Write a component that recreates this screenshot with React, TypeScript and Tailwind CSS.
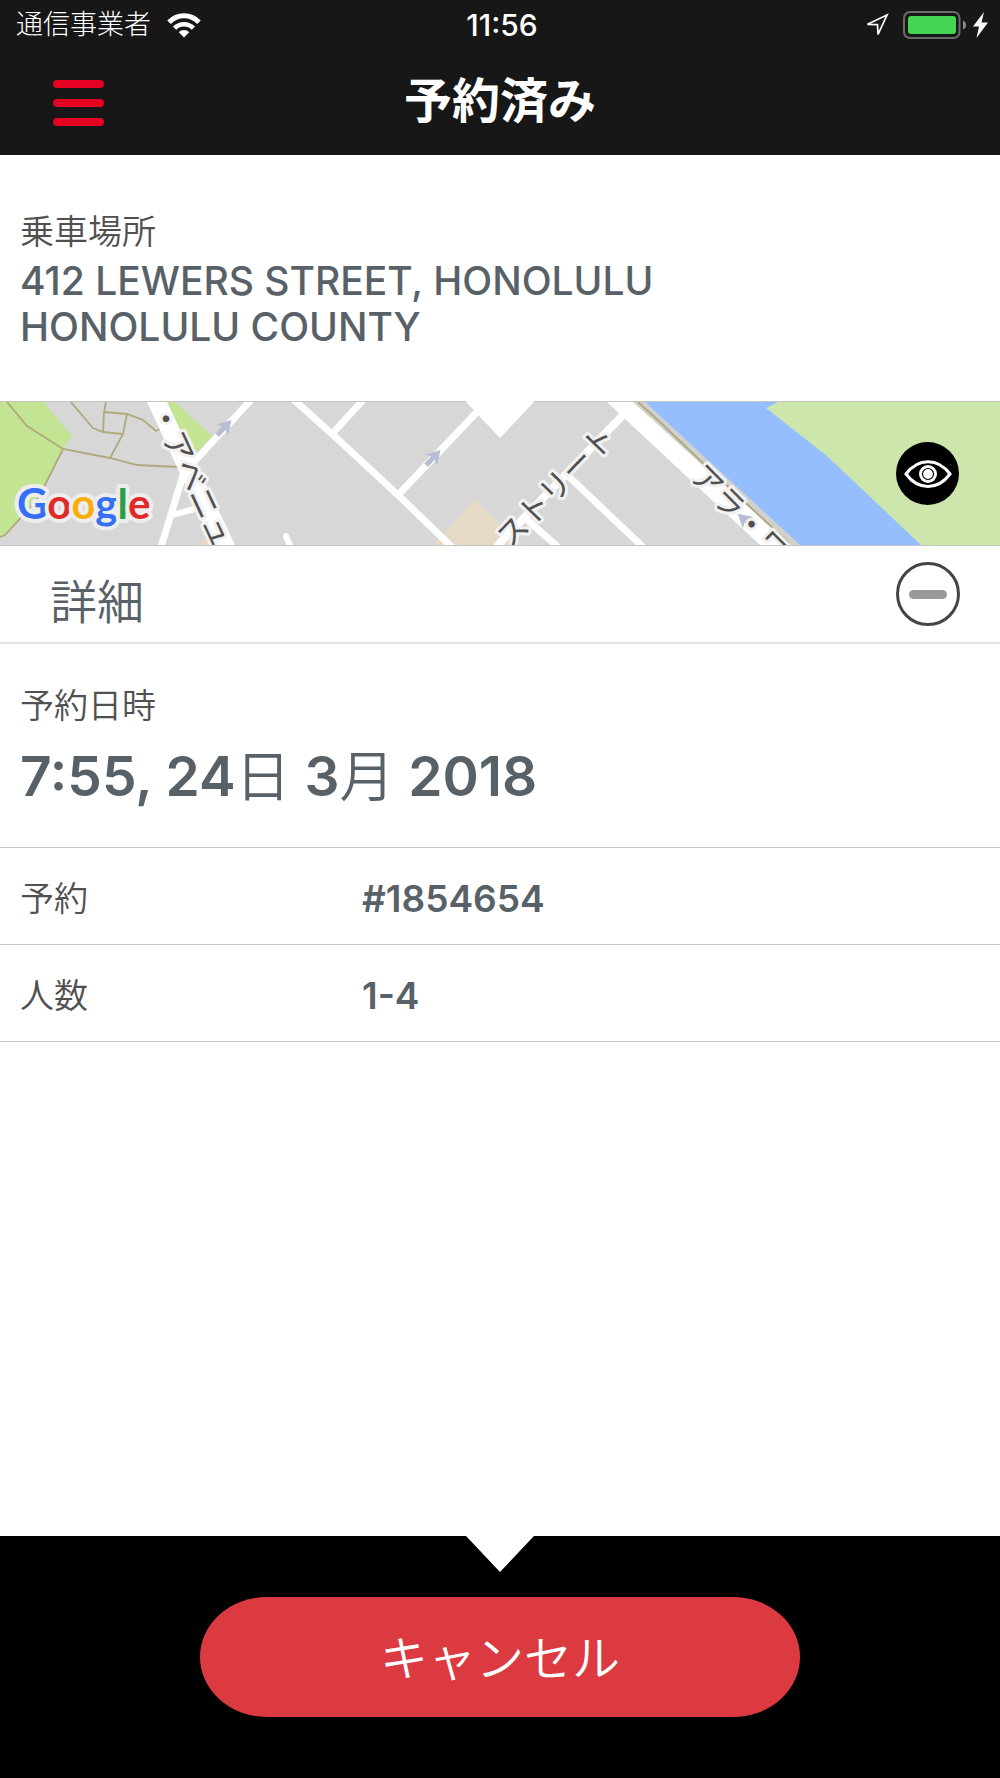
import React, { useState } from 'react';

const booking = {
  pickup: ['412 LEWERS STREET, HONOLULU', 'HONOLULU COUNTY'],
  time: '7:55',
  day: '24',
  month: '3',
  year: '2018',
  rows: [
    { label: '予約', value: '#1854654' },
    { label: '人数', value: '1-4' }
  ]
};

const WifiIcon = () => (
  <svg width="34" height="25" viewBox="0 0 34 25" fill="none" aria-hidden="true">
    <path d="M2 9.2C10.500 .6 23.500 .6 32 9.200" stroke="#fff" strokeWidth="5" />
    <path d="M7.600 15.200C13 10 21 10 26.400 15.200" stroke="#fff" strokeWidth="4.600" />
    <path d="M17 24.500L11.800 19.200C14.800 16.400 19.200 16.400 22.200 19.200Z" fill="#fff" />
  </svg>
);

const LocationIcon = () => (
  <svg width="24" height="24" viewBox="0 0 24 24" fill="none" aria-hidden="true">
    <path d="M22 2L2.500 11.300L12.500 11.600L13 21.500Z" stroke="#fff" strokeWidth="1.700" />
  </svg>
);

const BatteryIcon = () => (
  <svg width="64" height="28" viewBox="0 0 64 28" aria-hidden="true">
    <rect x="1" y="1" width="55.500" height="26" rx="6" fill="none" stroke="#6b6b6b" strokeWidth="2" />
    <rect x="5" y="5" width="48" height="18" rx="3" fill="#45d754" />
    <path d="M60 9.500C64 11 64 17 60 18.500Z" fill="#8a8a8a" />
  </svg>
);

const BoltIcon = () => (
  <svg width="15" height="26" viewBox="0 0 15 26" aria-hidden="true">
    <path d="M11 0L0 14.500H6L3.500 26L15 10.500H8.500Z" fill="#fff" />
  </svg>
);

const EyeIcon = () => (
  <svg width="48" height="30" viewBox="0 0 48 30" fill="none" aria-hidden="true">
    <path d="M2 15C14 -1.500 34 -1.500 46 15C34 31.500 14 31.500 2 15Z" stroke="#fff" strokeWidth="3" />
    <circle cx="24" cy="15" r="9" fill="#fff" />
    <circle cx="24" cy="15" r="5.500" stroke="#000" strokeWidth="1.200" />
  </svg>
);

const Notch = () => (
  <svg
    className="absolute -top-px left-1/2 -translate-x-1/2"
    width="68"
    height="37"
    viewBox="0 0 68 37"
    aria-hidden="true">
    <path d="M0 0H68V1L34 37L0 1Z" fill="#fff" />
  </svg>
);

const GoogleMark = () => (
  <svg className="absolute bottom-[6px] left-[14px]" width="150" height="56" viewBox="0 0 150 56">
    <text
      x="3"
      y="36"
      className="font-['Lato'] text-[42px] font-bold"
      stroke="#ededed"
      strokeWidth="8"
      strokeLinejoin="round"
      paintOrder="stroke">
      <tspan fill="#3470f1">G</tspan>
      <tspan fill="#e2292a">o</tspan>
      <tspan fill="#f9ae0b">o</tspan>
      <tspan fill="#3470f1">g</tspan>
      <tspan fill="#2f9c46">l</tspan>
      <tspan fill="#e2292a">e</tspan>
    </text>
  </svg>
);

const arrow = 'M-10 -2.500H0L-3 -8L11 0L-3 8L0 2.500H-10Z';

const StreetMap = () => (
  <svg
    className="block h-[143px] w-full"
    viewBox="0 0 1000 143"
    preserveAspectRatio="xMidYMid slice"
    role="img"
    aria-label="乗車場所の地図">
    <rect width="1000" height="143" fill="#d7d7d7" />

    {/* parks and water */}
    <path d="M0 0H44L72 34L63 47L45 83L38 98L5 133L0 136Z" fill="#c3e492" />
    <path d="M165 0H175L212 34L197 50H188Z" fill="#c3e492" />
    <path d="M645 0H1000V143H800L660 15Z" fill="#94beff" />
    <path d="M778 0L766 6L827 54L921 143H1000V0Z" fill="#cde6ab" />
    <path d="M475 98L433 143H522Z" fill="#e6dac7" />
    <path d="M198 143L208 134L216 143Z" fill="#e6dac7" />

    {/* footpaths */}
    <g fill="none" stroke="#b0a97f" strokeWidth="1.800">
      <path d="M7 0L27 24L63 47L110 56L137 63L178 65" />
      <path d="M63 47L45 83L37 98L5 133L0 135" />
      <path d="M70 -1L93 26L103 30L123 32" />
      <path d="M106 0L104 10L103 30" />
      <path d="M104 10L127 12L143 18L156 29L160 27" />
      <path d="M127 12L123 32L110 56" />
    </g>

    {/* roads */}
    <path d="M147 0H167L235 143H213Z" fill="#fff" />
    <g fill="none" stroke="#fff" strokeWidth="7">
      <path d="M192 62L251 -2" />
      <path d="M184 70L161 145" />
      <path d="M172 113L198 106" strokeWidth="6" />
      <path d="M286 134L291 146" strokeWidth="6" strokeLinecap="round" />
      <path d="M293 -3L332 32L398 93L455 148" />
      <path d="M331 33L364 -3" />
      <path d="M398 93L477 10" />
      <path d="M496 145L623 13" strokeWidth="8" />
      <path d="M565 71L643 145" />
      <path d="M525 116L558 145" />
    </g>
    <path d="M633 0L645 0L800 143H788Z" fill="#d0d0ce" />
    <path d="M607 0H633L790 143H760Z" fill="#fff" />
    <path d="M638 0L660 20L707 65L790 142" fill="none" stroke="#b0a97f" strokeWidth="1.800" />
    <g fill="#b9bdd3">
      <path d={arrow} transform="translate(224 26) rotate(-47)" />
      <path d={arrow} transform="translate(433 56) rotate(-47)" />
      <path d={arrow} transform="translate(746 119) rotate(-138)" />
    </g>

    <g
      className="font-['Noto_Sans_CJK_JP'] text-[31px]"
      fill="#505050"
      stroke="#f1f1f1"
      strokeWidth="6"
      strokeLinejoin="round"
      paintOrder="stroke"
      dominantBaseline="central">
      <text transform="translate(161 2) rotate(65)">・アベニュ</text>
      <text transform="translate(500 139) rotate(-46)">ストリート</text>
      <text transform="translate(698 66) rotate(45)">アラ・ワ</text>
    </g>
  </svg>
);

const App = () => {
  const [open, setOpen] = useState(true);

  return (
    <div className="flex min-h-screen flex-col bg-white font-['Inter','Noto_Sans_CJK_JP',sans-serif] text-[#596168]">
      <header className="bg-[#171717] pb-2 text-white">
        <div className="grid h-[50px] grid-cols-[1fr_auto_1fr] items-center pr-3 pl-4">
          <div className="flex items-center gap-4">
            <span className="text-[27px] font-light">通信事業者</span>
            <WifiIcon />
          </div>
          <span className="text-center text-[30px] font-medium">11:56</span>
          <div className="flex items-center justify-end">
            <LocationIcon />
            <span className="ml-[14px] flex items-center gap-[6px]">
              <BatteryIcon />
              <BoltIcon />
            </span>
          </div>
        </div>
        <div className="grid h-[97px] grid-cols-[1fr_auto_1fr] items-center">
          <button type="button" aria-label="メニュー" className="ml-[53px] flex w-[51px] flex-col gap-[11px] pt-2">
            <span className="h-2 w-full rounded-full bg-[#e60022]" />
            <span className="h-2 w-full rounded-full bg-[#e60022]" />
            <span className="h-2 w-full rounded-full bg-[#e60022]" />
          </button>
          <h1 className="pt-1 text-[48px] leading-[64px] font-bold">予約済み</h1>
        </div>
      </header>

      <main className="flex-1">
        <section className="h-[246px] px-5 pt-[54px]">
          <h2 className="mb-[3px] text-[34px] leading-[46px] font-[350] text-[#505050]">乗車場所</h2>
          <address className="text-[39px] leading-[46px] font-medium not-italic">
            {booking.pickup.map(line => (
              <span key={line} className="block">
                {line}
              </span>
            ))}
          </address>
        </section>

        <section className="relative border-y border-[#c4c4c4]">
          <StreetMap />
          <Notch />
          <GoogleMark />
          <button
            type="button"
            aria-label="地図を表示"
            className="absolute top-10 right-[41px] flex size-[63px] items-center justify-center rounded-full bg-black">
            <EyeIcon />
          </button>
        </section>

        <section>
          <div className="flex h-[98px] items-start justify-between border-b-2 border-[#e2e2e2] pt-4 pr-10 pl-[50px]">
            <h2 className="text-[47px] leading-[80px] font-[350]">詳細</h2>
            <button
              type="button"
              aria-label="詳細を閉じる"
              aria-expanded={open}
              onClick={() => setOpen(current => !current)}
              className="flex size-16 items-center justify-center rounded-full border-[3px] border-[#444]">
              <span className="h-[9px] w-[38px] rounded-full bg-[#999]" />
            </button>
          </div>

          {open ? (
            <>
              <div className="h-[204px] border-b border-[#c8c8c8] px-5 pt-[39px]">
                <h3 className="text-[34px] leading-[46px] font-[350] text-[#505050]">予約日時</h3>
                <p className="text-[55px] leading-[94px] font-semibold">
                  {booking.time}, {booking.day}
                  <span className="font-[350]">日</span> {booking.month}
                  <span className="font-[350]">月</span> {booking.year}
                </p>
              </div>
              <dl>
                {booking.rows.map(row => (
                  <div key={row.label} className="flex h-[97px] items-center border-b border-[#c8c8c8] px-5 pt-1">
                    <dt className="w-[342px] text-[34px] font-[350] text-[#505050]">{row.label}</dt>
                    <dd className="pt-[2px] text-[37px] font-semibold">{row.value}</dd>
                  </div>
                ))}
              </dl>
            </>
          ) : null}
        </section>
      </main>

      <footer className="relative flex justify-center bg-black pt-[61px] pb-[61px]">
        <Notch />
        <button
          type="button"
          className="h-[120px] w-3/5 rounded-[67px/60px] bg-[#dc3a41] pt-1 text-[48px] font-[350] text-white">
          キャンセル
        </button>
      </footer>
    </div>
  );
};

export default App;
